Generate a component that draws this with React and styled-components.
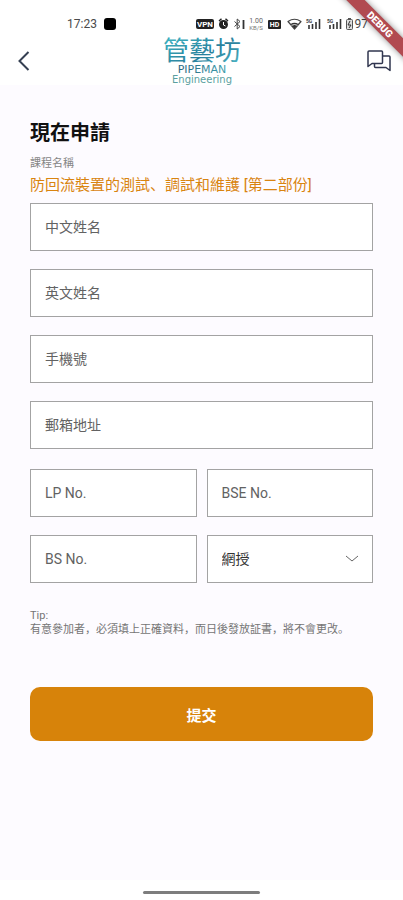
import React from "react";
import styled, { createGlobalStyle } from "styled-components";

const GlobalStyle = createGlobalStyle`
  *, *::before, *::after { box-sizing: border-box; }
  body {
    margin: 0;
    background: #fdfbff;
    font-family: Roboto, "Noto Sans CJK SC", sans-serif;
  }
  input, select, button { font-family: inherit; }
`;

const Screen = styled.div`
  position: relative;
  display: flex;
  flex-direction: column;
  min-height: 100vh;
  overflow: hidden;
  background: #fdfbff;
`;

const StatusBar = styled.div`
  display: flex;
  align-items: center;
  justify-content: space-between;
  height: 36px;
  padding: 12px 35px 0 67px;
  background: #ffffff;
  color: #4a4a4a;
  font-size: 12px;
  line-height: 16px;
`;

const StatusGroup = styled.div`
  display: flex;
  align-items: center;
  gap: ${(p) => p.$gap}px;
`;

const AppSquare = styled.span`
  width: 12px;
  height: 12px;
  border-radius: 3px;
  background: #000000;
`;

const StatusIcons = styled.svg`
  display: block;
  width: 158px;
  height: 14px;
  overflow: visible;
`;

const Header = styled.header`
  display: grid;
  grid-template-columns: 1fr auto 1fr;
  align-items: center;
  height: 49px;
  padding: 0 12px;
  background: #ffffff;
`;

const IconButton = styled.button`
  display: flex;
  justify-self: ${(p) => p.$side};
  padding: 0;
  border: 0;
  background: none;
  cursor: pointer;
`;

const Logo = styled.svg`
  display: block;
  width: 82px;
  height: 49px;
  overflow: visible;
`;

const Main = styled.main`
  flex: 1;
  padding: 35px 30px 24px;
`;

const Title = styled.h1`
  margin: 0;
  color: #111111;
  font-size: 20px;
  line-height: 26px;
  font-weight: 700;
`;

const CourseLabel = styled.p`
  margin: 10px 0 0;
  color: #858585;
  font-size: 11px;
  line-height: 16px;
`;

const CourseName = styled.p`
  margin: 3px 0 0;
  color: #d98410;
  font-size: 15px;
  line-height: 20px;
`;

const Form = styled.form`
  display: flex;
  flex-direction: column;
  gap: 20px;
  margin-top: 8px;
`;

const FieldGrid = styled.div`
  display: grid;
  grid-template-columns: repeat(${(p) => p.$columns}, minmax(0, 1fr));
  gap: 18px 10px;
`;

const TextField = styled.input`
  width: 100%;
  height: 48px;
  padding: 0 14px;
  border: 1px solid #a3a3a3;
  border-radius: 0;
  background: #ffffff;
  color: #333333;
  font-size: 14px;
  &::placeholder { color: #626262; opacity: 1; }
`;

const SelectWrap = styled.div`
  display: grid;
  align-items: center;
  & > * { grid-area: 1 / 1; }
  & > svg { justify-self: end; margin-right: 14px; pointer-events: none; }
`;

const SelectField = styled.select`
  width: 100%;
  height: 48px;
  padding: 0 32px 0 14px;
  border: 1px solid #a3a3a3;
  border-radius: 0;
  background: #ffffff;
  color: #333333;
  font-size: 14px;
  appearance: none;
`;

const Tip = styled.p`
  margin: 6px 0 0;
  color: #757575;
  font-size: 11px;
  line-height: 14px;
`;

const SubmitButton = styled.button`
  height: 54px;
  margin-top: 30px;
  border: 0;
  border-radius: 10px;
  background: #d7830a;
  color: #ffffff;
  font-size: 15px;
  font-weight: 700;
  cursor: pointer;
`;

const NavBar = styled.footer`
  display: flex;
  justify-content: center;
  align-items: center;
  height: 20px;
  padding-top: 4px;
  background: #ffffff;
`;

const HomeHandle = styled.span`
  width: 29%;
  height: 3px;
  border-radius: 2px;
  background: #7d7d7d;
`;

const DebugRibbon = styled.div`
  position: absolute;
  top: 18px;
  right: -37px;
  width: 120px;
  height: 13px;
  transform: rotate(45deg);
  background: #b14a50;
  box-shadow: 0 0 6px rgba(0, 0, 0, 0.45);
  color: #ffffff;
  font-size: 10px;
  line-height: 13px;
  font-weight: 900;
  text-align: center;
`;

function PhoneStatus() {
  return (
    <StatusIcons viewBox="0 0 158 14" aria-hidden="true" fontFamily="Roboto, sans-serif">
      <rect x="0" y="2" width="18" height="10" rx="2" fill="#222" />
      <text x="9" y="10" fontSize="8" fontWeight="700" fill="#fff" textAnchor="middle">VPN</text>
      <circle cx="27.500" cy="7.500" r="4.500" fill="#222" />
      <path d="M23 4 25.500 1.800M32 4 29.500 1.800" stroke="#222" strokeWidth="1.500" />
      <path d="M27.500 5v3l2 1" stroke="#fff" fill="none" />
      <path d="m38.500 4.500 5.500 5-2.800 2.500V2l2.800 2.500-5.500 5" stroke="#444" strokeWidth="1" fill="none" />
      <path d="M47.500 3v9" stroke="#333" strokeWidth="1.800" />
      <text x="60" y="6" fontSize="7" fill="#666" textAnchor="middle">1.00</text>
      <text x="60" y="13" fontSize="6" fill="#777" textAnchor="middle">KB/S</text>
      <rect x="72" y="3" width="13" height="9" rx="1" fill="#222" />
      <text x="78.500" y="10" fontSize="7" fontWeight="700" fill="#fff" textAnchor="middle">HD</text>
      <path d="M92 4.500q6.500-4.500 13 0L98.500 12Z" stroke="#444" strokeWidth="1.200" strokeLinejoin="round" fill="none" />
      <path d="M94.500 7q4-2.600 8 0L98.500 11.500Z" fill="#333" />
      <path d="M95.500 8.300q3-1.600 6 0" stroke="#fff" strokeWidth="0.800" fill="none" />
      <text x="110" y="6" fontSize="5" fontWeight="700" fill="#444">5G</text>
      <path d="M113 12V8M116.500 12V7M120 12V5M123.500 12V2" stroke="#333" strokeWidth="1.600" />
      <text x="131" y="6" fontSize="5" fontWeight="700" fill="#444">5G</text>
      <path d="M134 12V8M137.500 12V7M141 12V5M144.500 12V2" stroke="#333" strokeWidth="1.600" />
      <rect x="150.500" y="2.500" width="6" height="10" rx="1" fill="#ddd" stroke="#555" />
      <path d="M152 1.500h3" stroke="#555" />
      <path d="m154 4-2 4h3l-2 3" stroke="#333" fill="none" />
    </StatusIcons>
  );
}

function PipemanLogo() {
  return (
    <Logo viewBox="0 0 82 49" role="img" aria-label="管藝坊 Pipeman Engineering">
      <defs>
        <linearGradient id="pipe" x1="0" y1="0" x2="1" y2="1">
          <stop offset="0" stopColor="#42c0ca" />
          <stop offset="0.6" stopColor="#287f9c" />
          <stop offset="1" stopColor="#52bdca" />
        </linearGradient>
        <linearGradient id="name" x1="0" y1="0" x2="1" y2="0">
          <stop offset="0" stopColor="#28657f" />
          <stop offset="1" stopColor="#3f9fae" />
        </linearGradient>
      </defs>
      <text x="41" y="24" fontSize="26" fontFamily='"Noto Sans CJK TC", sans-serif' fill="url(#pipe)" textAnchor="middle">管藝坊</text>
      <text x="41" y="37" fontSize="11" fontFamily='"DejaVu Sans", sans-serif' fill="url(#name)" textAnchor="middle">PIPEMAN</text>
      <text x="41" y="47" fontSize="10" fontFamily='"DejaVu Sans", sans-serif' fill="#5b9f9f" textAnchor="middle">Engineering</text>
    </Logo>
  );
}

const contactFields = ["中文姓名", "英文姓名", "手機號", "郵箱地址"];
const licenceFields = ["LP No.", "BSE No.", "BS No."];

export default function App() {
  return (
    <>
      <GlobalStyle />
      <Screen>
        <StatusBar>
          <StatusGroup $gap={7}>
            <span>17:23</span>
            <AppSquare />
          </StatusGroup>
          <StatusGroup $gap={1}>
            <PhoneStatus />
            <span>97</span>
          </StatusGroup>
        </StatusBar>
        <Header>
          <IconButton $side="start" type="button" aria-label="返回">
            <svg width="20" height="22" viewBox="0 0 20 22" fill="none" stroke="#354052" strokeWidth="2">
              <path d="M16.500 2 7.500 11l9 9" />
            </svg>
          </IconButton>
          <PipemanLogo />
          <IconButton $side="end" type="button" aria-label="訊息">
            <svg width="26" height="24" viewBox="0 0 26 24" fill="none" stroke="#30364f" strokeWidth="1.500" strokeLinejoin="round">
              <path d="M7 14.500 3 17.500V3q0-1 1-1h12.500q1 0 1 1v10.500q0 1-1 1Z" />
              <path d="M17.500 7H24q1 0 1 1v13.500l-4-3H10.500q-1 0-1-1v-3" />
            </svg>
          </IconButton>
        </Header>
        <Main>
          <Title>現在申請</Title>
          <CourseLabel>課程名稱</CourseLabel>
          <CourseName>防回流裝置的測試、調試和維護 [第二部份]</CourseName>
          <Form onSubmit={(event) => event.preventDefault()}>
            <FieldGrid $columns={1}>
              {contactFields.map((name) => (
                <TextField key={name} type="text" placeholder={name} aria-label={name} />
              ))}
            </FieldGrid>
            <FieldGrid $columns={2}>
              {licenceFields.map((name) => (
                <TextField key={name} type="text" placeholder={name} aria-label={name} />
              ))}
              <SelectWrap>
                <SelectField aria-label="授課方式" defaultValue="網授">
                  <option>網授</option>
                </SelectField>
                <svg width="14" height="8" viewBox="0 0 14 8" fill="none" stroke="#666666">
                  <path d="m1 1 6 5 6-5" />
                </svg>
              </SelectWrap>
            </FieldGrid>
            <Tip>
              Tip:
              <br />
              有意參加者，必須填上正確資料，而日後發放証書，將不會更改。
            </Tip>
            <SubmitButton type="submit">提交</SubmitButton>
          </Form>
        </Main>
        <NavBar>
          <HomeHandle />
        </NavBar>
        <DebugRibbon>DEBUG</DebugRibbon>
      </Screen>
    </>
  );
}
